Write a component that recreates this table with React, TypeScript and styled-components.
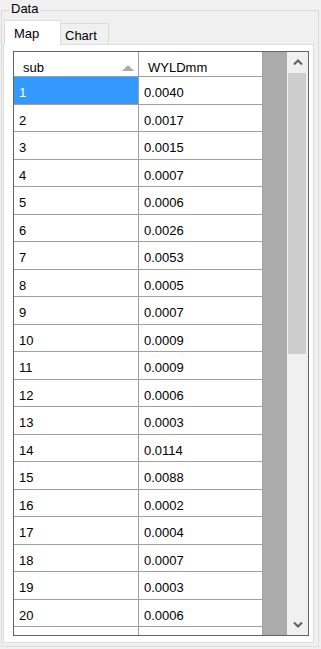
import React from 'react';
import styled, { createGlobalStyle } from 'styled-components';

const GlobalStyle = createGlobalStyle`
  html, body {
    margin: 0;
    padding: 0;
    background: #f0f0f0;
  }
  body {
    font-family: "Liberation Sans", Arial, sans-serif;
    font-size: 13px;
    color: #000;
  }
  * {
    box-sizing: border-box;
  }
`;

const Panel = styled.div`
  width: 321px;
  height: 649px;
  padding: 10px 0 0 1px;
`;

const GroupBox = styled.div`
  position: relative;
  width: 318px;
  height: 637px;
  border: 1px solid #dcdcdc;
  padding: 9px 4px 3px 1px;
  display: flex;
  flex-direction: column;
`;

const Caption = styled.span`
  position: absolute;
  top: -10px;
  left: 7px;
  padding: 0 2px;
  line-height: 15px;
  background: #f0f0f0;
`;

const TabStrip = styled.div`
  height: 24px;
  flex-shrink: 0;
  display: flex;
  align-items: flex-end;
  padding-left: 1px;
`;

const Tab = styled.div<{ $active?: boolean }>`
  position: relative;
  line-height: 15px;
  border-top: 1px solid #dcdcdc;
  border-right: 1px solid #dcdcdc;
  border-left: ${p => (p.$active ? '1px solid #dcdcdc' : 'none')};
  background: ${p => (p.$active ? '#ffffff' : '#f0f0f0')};
  width: ${p => (p.$active ? '57px' : '48px')};
  height: ${p => (p.$active ? '25px' : '21px')};
  margin-bottom: ${p => (p.$active ? '-1px' : '0')};
  padding: ${p => (p.$active ? '5px 0 0 9px' : '4px 0 0 4px')};
  z-index: ${p => (p.$active ? 1 : 0)};
`;

const TabPage = styled.div`
  flex: 1;
  min-height: 0;
  display: flex;
  border: 1px solid #dcdcdc;
  background: #ffffff;
  padding: 6px 4px 6px 9px;
  overflow: hidden;
`;

const Grid = styled.div`
  flex: 1;
  min-height: 0;
  display: flex;
  border: 1px solid #646464;
  overflow: hidden;
`;

const Table = styled.div`
  flex: 1;
  display: flex;
  flex-direction: column;
  background: #ababab;
  overflow: hidden;
`;

const Row = styled.div<{ $header?: boolean }>`
  display: flex;
  flex-shrink: 0;
  height: ${p => (p.$header ? '25px' : '27.5px')};
`;

const Cell = styled.div<{ $width: number; $header?: boolean; $selected?: boolean }>`
  display: flex;
  align-items: flex-start;
  justify-content: space-between;
  width: ${p => p.$width}px;
  height: 100%;
  line-height: 15px;
  white-space: nowrap;
  padding: ${p => (p.$header ? '8px 4px 0 9px' : '8px 4px 0 5px')};
  border-right: 1px solid #a0a0a0;
  border-bottom: 1px solid #a0a0a0;
  background: ${p => (p.$selected ? '#3399ff' : '#ffffff')};
  color: ${p => (p.$selected ? '#ffffff' : '#000000')};
`;

const SortGlyph = styled.svg`
  margin-top: 5px;
  flex-shrink: 0;
`;

const ScrollBar = styled.div`
  width: 21px;
  display: flex;
  flex-direction: column;
  background: #f0f0f0;
`;

const ArrowButton = styled.div`
  height: 21px;
  flex-shrink: 0;
  display: flex;
  align-items: center;
  justify-content: center;
`;

const Track = styled.div`
  flex: 1;
  min-height: 0;
`;

const Thumb = styled.div`
  height: 281px;
  margin: 0 2px 0 1px;
  background: #cdcdcd;
`;

const rows: [string, string][] = [
  ['1', '0.0040'],
  ['2', '0.0017'],
  ['3', '0.0015'],
  ['4', '0.0007'],
  ['5', '0.0006'],
  ['6', '0.0026'],
  ['7', '0.0053'],
  ['8', '0.0005'],
  ['9', '0.0007'],
  ['10', '0.0009'],
  ['11', '0.0009'],
  ['12', '0.0006'],
  ['13', '0.0003'],
  ['14', '0.0114'],
  ['15', '0.0088'],
  ['16', '0.0002'],
  ['17', '0.0004'],
  ['18', '0.0007'],
  ['19', '0.0003'],
  ['20', '0.0006'],
  ['21', '0.0005'],
];

const Chevron = ({ down }: { down?: boolean }) => (
  <svg width="10" height="7" viewBox="0 0 10 7">
    <polyline
      points={down ? '1,1.5 5,5.5 9,1.5' : '1,5.5 5,1.5 9,5.5'}
      fill="none"
      stroke="#606060"
      strokeWidth="2"
    />
  </svg>
);

export default function App() {
  return (
    <>
      <GlobalStyle />
      <Panel>
        <GroupBox>
          <Caption>Data</Caption>
          <TabStrip>
            <Tab $active>Map</Tab>
            <Tab>Chart</Tab>
          </TabStrip>
          <TabPage>
            <Grid>
              <Table>
                <Row $header>
                  <Cell $width={125} $header>
                    <span>sub</span>
                    <SortGlyph width="12" height="6" viewBox="0 0 12 6">
                      <polygon points="0,6 6,0 12,6" fill="#acacac" />
                    </SortGlyph>
                  </Cell>
                  <Cell $width={124} $header>
                    <span>WYLDmm</span>
                  </Cell>
                </Row>
                {rows.map(([sub, value], i) => (
                  <Row key={sub}>
                    <Cell $width={125} $selected={i === 0}>{i < 20 ? sub : ''}</Cell>
                    <Cell $width={124}>{i < 20 ? value : ''}</Cell>
                  </Row>
                ))}
              </Table>
              <ScrollBar>
                <ArrowButton>
                  <Chevron />
                </ArrowButton>
                <Track>
                  <Thumb />
                </Track>
                <ArrowButton>
                  <Chevron down />
                </ArrowButton>
              </ScrollBar>
            </Grid>
          </TabPage>
        </GroupBox>
      </Panel>
    </>
  );
}
